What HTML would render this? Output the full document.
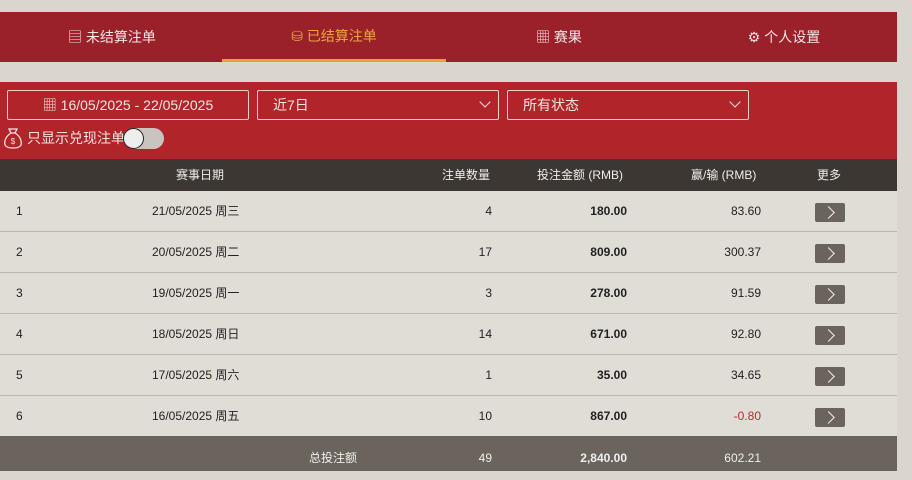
<!DOCTYPE html>
<html><head><meta charset="utf-8"><style>
*{margin:0;padding:0;box-sizing:border-box}
body{width:912px;height:471px;background:#dad5cf;font-family:"Liberation Sans","Noto Sans CJK SC",sans-serif;font-size:13px;position:relative;overflow:hidden;color:#222}
.nav{position:absolute;left:0;top:12px;width:897px;height:50px;background:#9a2129}
.tab{position:absolute;top:0;height:50px;line-height:50px;color:#f2e6e6;font-size:14px;text-align:center;width:224px}
.tab.act{color:#e8a640;border-bottom:3px solid #e3a33c;line-height:48px}
.filt{position:absolute;left:0;top:82px;width:897px;height:77px;background:#b12429}
.box{position:absolute;top:8px;height:30px;border:1px solid #e8cfcf;border-radius:2px;color:#f3e3e3;font-size:14px;line-height:28px}
.chev{position:absolute;right:9px;top:7px;width:8px;height:8px;border-right:1px solid #eee;border-bottom:1px solid #eee;transform:rotate(45deg)}
.hdr{position:absolute;left:0;top:159px;width:897px;height:32px;background:#3c3732;color:#eee;font-size:12px;line-height:32px}
.c{position:absolute;white-space:nowrap}
.row{position:absolute;left:0;width:897px;height:41px;background:#e0dcd6;border-bottom:1px solid #bdb7b0;font-size:12px;line-height:40px}
.btn{position:absolute;left:815px;top:12px;width:30px;height:19px;background:#6b645d;border-radius:2px}
.btn:after{content:"";position:absolute;left:9px;top:5px;width:8px;height:8px;border-right:1.5px solid #eee;border-top:1.5px solid #eee;transform:rotate(45deg)}
.foot{position:absolute;left:0;top:436px;width:897px;height:35px;background:#6b645d;color:#eee;font-size:12px;line-height:44px}
.r{text-align:right}
b{font-weight:bold}
</style></head><body>
<div class="nav">
 <div class="tab" style="left:0">▤ 未结算注单</div>
 <div class="tab act" style="left:222px">⛁ 已结算注单</div>
 <div class="tab" style="left:447px">▦ 赛果</div>
 <div class="tab" style="left:672px">⚙ 个人设置</div>
</div>
<div class="filt">
 <div class="box" style="left:7px;width:242px;text-align:center">▦ 16/05/2025 - 22/05/2025</div>
 <div class="box" style="left:257px;width:242px;padding-left:15px">近7日<span class="chev"></span></div>
 <div class="box" style="left:507px;width:242px;padding-left:15px">所有状态<span class="chev"></span></div>
 <svg style="position:absolute;left:3px;top:45px" width="20" height="22" viewBox="0 0 20 22" fill="none" stroke="#f3e3e3" stroke-width="1.3"><path d="M6 2h8l-2 4H8z"/><path d="M8 6C3 9 1 14 2 18c1 2 3 3 8 3s7-1 8-3c1-4-1-9-6-12"/><text x="10" y="17" font-size="8" fill="#f3e3e3" stroke="none" text-anchor="middle" font-family="Liberation Sans">$</text></svg>
 <div style="position:absolute;left:27px;top:46px;color:#f3e3e3;font-size:14px;line-height:20px">只显示兑现注单</div>
 <div style="position:absolute;left:123px;top:46px;width:41px;height:21px;border-radius:11px;background:#c9c4bf"><div style="position:absolute;left:0;top:0;width:21px;height:21px;border-radius:50%;background:#eee;border:1.5px solid #222"></div></div>
</div>
<div class="hdr">
 <span class="c" style="left:176px">赛事日期</span>
 <span class="c" style="left:442px">注单数量</span>
 <span class="c" style="left:537px">投注金额 (RMB)</span>
 <span class="c" style="left:691px">赢/输 (RMB)</span>
 <span class="c" style="left:817px">更多</span>
</div>
<div class="row" style="top:191px"><span class="c" style="left:16px">1</span><span class="c" style="left:152px">21/05/2025 周三</span><span class="c r" style="right:405px">4</span><span class="c r" style="right:270px"><b>180.00</b></span><span class="c r" style="right:136px">83.60</span><span class="btn"></span></div>
<div class="row" style="top:232px"><span class="c" style="left:16px">2</span><span class="c" style="left:152px">20/05/2025 周二</span><span class="c r" style="right:405px">17</span><span class="c r" style="right:270px"><b>809.00</b></span><span class="c r" style="right:136px">300.37</span><span class="btn"></span></div>
<div class="row" style="top:273px"><span class="c" style="left:16px">3</span><span class="c" style="left:152px">19/05/2025 周一</span><span class="c r" style="right:405px">3</span><span class="c r" style="right:270px"><b>278.00</b></span><span class="c r" style="right:136px">91.59</span><span class="btn"></span></div>
<div class="row" style="top:314px"><span class="c" style="left:16px">4</span><span class="c" style="left:152px">18/05/2025 周日</span><span class="c r" style="right:405px">14</span><span class="c r" style="right:270px"><b>671.00</b></span><span class="c r" style="right:136px">92.80</span><span class="btn"></span></div>
<div class="row" style="top:355px"><span class="c" style="left:16px">5</span><span class="c" style="left:152px">17/05/2025 周六</span><span class="c r" style="right:405px">1</span><span class="c r" style="right:270px"><b>35.00</b></span><span class="c r" style="right:136px">34.65</span><span class="btn"></span></div>
<div class="row" style="top:396px;height:40px;border:none"><span class="c" style="left:16px">6</span><span class="c" style="left:152px">16/05/2025 周五</span><span class="c r" style="right:405px">10</span><span class="c r" style="right:270px"><b>867.00</b></span><span class="c r" style="right:136px;color:#c0272d">-0.80</span><span class="btn"></span></div>
<div class="foot"><span class="c" style="left:309px">总投注额</span><span class="c r" style="right:405px">49</span><span class="c r" style="right:270px"><b>2,840.00</b></span><span class="c r" style="right:136px">602.21</span></div>
</body></html>
